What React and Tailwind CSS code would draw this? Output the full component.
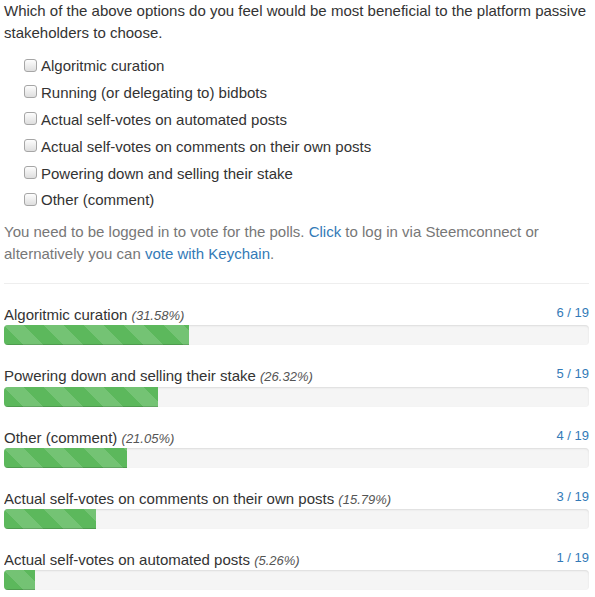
const options = [
  "Algoritmic curation",
  "Running (or delegating to) bidbots",
  "Actual self-votes on automated posts",
  "Actual self-votes on comments on their own posts",
  "Powering down and selling their stake",
  "Other (comment)",
]

const results = [
  { label: "Algoritmic curation", pct: "31.58", votes: 6 },
  { label: "Powering down and selling their stake", pct: "26.32", votes: 5 },
  { label: "Other (comment)", pct: "21.05", votes: 4 },
  { label: "Actual self-votes on comments on their own posts", pct: "15.79", votes: 3 },
  { label: "Actual self-votes on automated posts", pct: "5.26", votes: 1 },
]

const ResultRow = ({ label, pct, votes }) => (
  <div className="mb-[20px]">
    <div className="flex justify-between items-start h-[21.25px] overflow-hidden">
      <span className="leading-[21.25px]">
        {label} <em className="text-[13px] leading-none text-[#555]">({pct}%)</em>
      </span>
      <span className="text-[13px] leading-[18px] text-[#337ab7]">{votes} / 19</span>
    </div>
    <div className="h-[20px] bg-[#f5f5f5] rounded-[4px] overflow-hidden shadow-[inset_0_1px_2px_rgba(0,0,0,0.1)]">
      <div
        className="h-full bg-[#5cb85c] bg-[linear-gradient(45deg,rgba(255,255,255,.15)_25%,transparent_25%,transparent_50%,rgba(255,255,255,.15)_50%,rgba(255,255,255,.15)_75%,transparent_75%,transparent)] bg-[length:40px_40px] shadow-[inset_0_-1px_0_rgba(0,0,0,0.15)]"
        style={{ width: `${pct}%` }}
      ></div>
    </div>
  </div>
)

export default function App() {
  return (
    <div className="bg-white min-h-screen pl-[4px] pr-[6px] text-[15px] leading-[21.43px] text-[#333] font-['Liberation_Sans',Arial,sans-serif]">
      <p className="leading-[22px]">
        Which of the above options do you feel would be most beneficial to the platform passive
        stakeholders to choose.
      </p>

      {/* poll options */}
      <div className="mt-[11.3px] flex flex-col gap-[5.42px]">
        {options.map((o) => (
          <label key={o} className="flex items-center h-[21.43px] pl-[20px]">
            <input
              type="checkbox"
              className="appearance-none m-0 w-[13px] h-[13px] mt-[-2px] border border-[#a6a6a6] rounded-[3px] bg-[linear-gradient(#fdfdfd,#dedede)]"
            />
            <span className="ml-[4px]">{o}</span>
          </label>
        ))}
      </div>

      <p className="mt-[10.4px] text-[#777]">
        You need to be logged in to vote for the polls.{" "}
        <a className="text-[#337ab7]">Click</a> to log in via Steemconnect or alternatively you can{" "}
        <a className="text-[#337ab7]">vote with Keychain</a>.
      </p>

      <hr className="mt-[19px] mb-[20px] border-t border-[#eee]" />

      {results.map((r) => (
        <ResultRow key={r.label} {...r} />
      ))}
    </div>
  )
}
